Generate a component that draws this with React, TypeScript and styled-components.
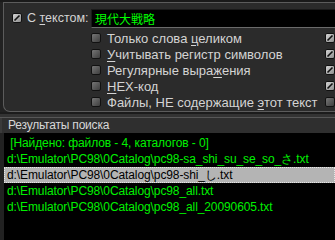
import React from 'react'
import styled, { createGlobalStyle } from 'styled-components'

const Global = createGlobalStyle`
  html, body { margin: 0; padding: 0; background: #1d1d1d; }
  body { font-family: "Liberation Sans", Arial, sans-serif; }
`

const Screen = styled.div`
  width: 335px;
  height: 240px;
  overflow: hidden;
  display: flex;
  flex-direction: column;
  background: #222;
`

const TopEdge = styled.div`
  height: 2px;
  background: #1a1a1a;
  flex: none;
`

const OptionsPanel = styled.div`
  margin-left: 3px;
  height: 110px;
  flex: none;
  border: 1px solid #5c5c5c;
  border-right: none;
  border-radius: 0 0 0 7px;
  background: #2b2b2b;
  display: flex;
  flex-direction: column;
  padding: 5px 0 0 8px;
  box-sizing: border-box;
`

const SearchRow = styled.div`
  display: flex;
  align-items: center;
  height: 20px;
`

const Label = styled.span`
  color: #d4d4d4;
  font-size: 12.5px;
  margin-left: 5px;
  width: 64px;
  white-space: nowrap;
`

const TextInput = styled.div`
  flex: 1;
  height: 19px;
  background: #000;
  border-top: 1px solid #1a1a1a;
  border-left: 1px solid #1a1a1a;
  border-bottom: 1px solid #6a6a6a;
  box-sizing: border-box;
  color: #00ff00;
  font-family: "Noto Sans CJK JP", sans-serif;
  font-size: 12px;
  line-height: 17px;
  padding-left: 3px;
`

const OptionList = styled.div`
  display: flex;
  flex-direction: column;
  margin: 2px 0 0 79px;
`

const OptionRow = styled.div`
  display: flex;
  align-items: center;
  height: 16px;
`

const OptionText = styled.span`
  flex: 1;
  color: #d4d4d4;
  font-size: 13px;
  margin-left: 6px;
  white-space: nowrap;
`

const Separator = styled.div`
  height: 6px;
  flex: none;
  border-top: 2px solid #1c1c1c;
  border-bottom: 1px solid #575757;
  background: #333;
  box-sizing: border-box;
`

const ResultsHeader = styled.div`
  height: 15px;
  flex: none;
  background: #2f2f2f;
  border-left: 2px solid #3a3a3a;
  color: #d8d8d8;
  font-size: 12px;
  letter-spacing: -0.2px;
  line-height: 15px;
  padding-left: 6px;
`

const ResultsList = styled.div`
  flex: 1;
  background: #000;
  margin-left: 4px;
  padding-top: 2px;
  display: flex;
  flex-direction: column;
`

const ResultRow = styled.div<{ $selected?: boolean }>`
  height: 16px;
  line-height: 16px;
  font-size: 12px;
  letter-spacing: -0.1px;
  padding-left: 3px;
  white-space: pre;
  box-sizing: border-box;
  color: ${p => (p.$selected ? '#000' : '#00f000')};
  background: ${p => (p.$selected ? '#b4b4b4' : 'transparent')};
  outline: ${p => (p.$selected ? '1px dotted #e6e6e6' : 'none')};
  outline-offset: -1px;
`

const U = styled.span`
  text-decoration: underline;
  text-underline-offset: 2px;
`

function Check({ checked }: { checked: boolean }) {
  const id = checked ? 'gc' : 'gu'
  return (
    <svg width="10" height="10" viewBox="0 0 10 10" style={{ flex: 'none' }}>
      <defs>
        <linearGradient id={id} x1="0" y1="0" x2="1" y2="1">
          <stop offset="0" stopColor={checked ? '#d8d8d8' : '#7a7a7a'} />
          <stop offset="1" stopColor={checked ? '#8a8a8a' : '#3a3a3a'} />
        </linearGradient>
      </defs>
      <rect x="0.5" y="0.5" width="9" height="9" rx="1.5" fill={`url(#${id})`} stroke="#111" />
      {checked && <path d="M2.5 7.5 L7.5 2.5" stroke="#111" strokeWidth="1.6" />}
    </svg>
  )
}

const options: { text: React.ReactNode; on: boolean }[] = [
  { text: <>Только слова <U>ц</U>еликом</>, on: true },
  { text: <><U>У</U>читывать регистр символов</>, on: true },
  { text: <>Регулярные выра<U>ж</U>ения</>, on: true },
  { text: <><U>H</U>EX-код</>, on: true },
  { text: <>Файлы, НЕ содержащие <U>э</U>тот текст</>, on: false },
]

const results = [
  ' [Найдено: файлов - 4, каталогов - 0]',
  'd:\\Emulator\\PC98\\0Catalog\\pc98-sa_shi_su_se_so_さ.txt',
  'd:\\Emulator\\PC98\\0Catalog\\pc98-shi_し.txt',
  'd:\\Emulator\\PC98\\0Catalog\\pc98_all.txt',
  'd:\\Emulator\\PC98\\0Catalog\\pc98_all_20090605.txt',
]

export default function App() {
  return (
    <Screen>
      <Global />
      <TopEdge />
      <OptionsPanel>
        <SearchRow>
          <Check checked />
          <Label>С <U>т</U>екстом:</Label>
          <TextInput>現代大戦略</TextInput>
        </SearchRow>
        <OptionList>
          {options.map((o, i) => (
            <OptionRow key={i}>
              <Check checked={false} />
              <OptionText>{o.text}</OptionText>
              <Check checked={o.on} />
            </OptionRow>
          ))}
        </OptionList>
      </OptionsPanel>
      <Separator />
      <ResultsHeader>Результаты поиска</ResultsHeader>
      <ResultsList>
        {results.map((r, i) => (
          <ResultRow key={i} $selected={i === 2}>{r}</ResultRow>
        ))}
      </ResultsList>
    </Screen>
  )
}
